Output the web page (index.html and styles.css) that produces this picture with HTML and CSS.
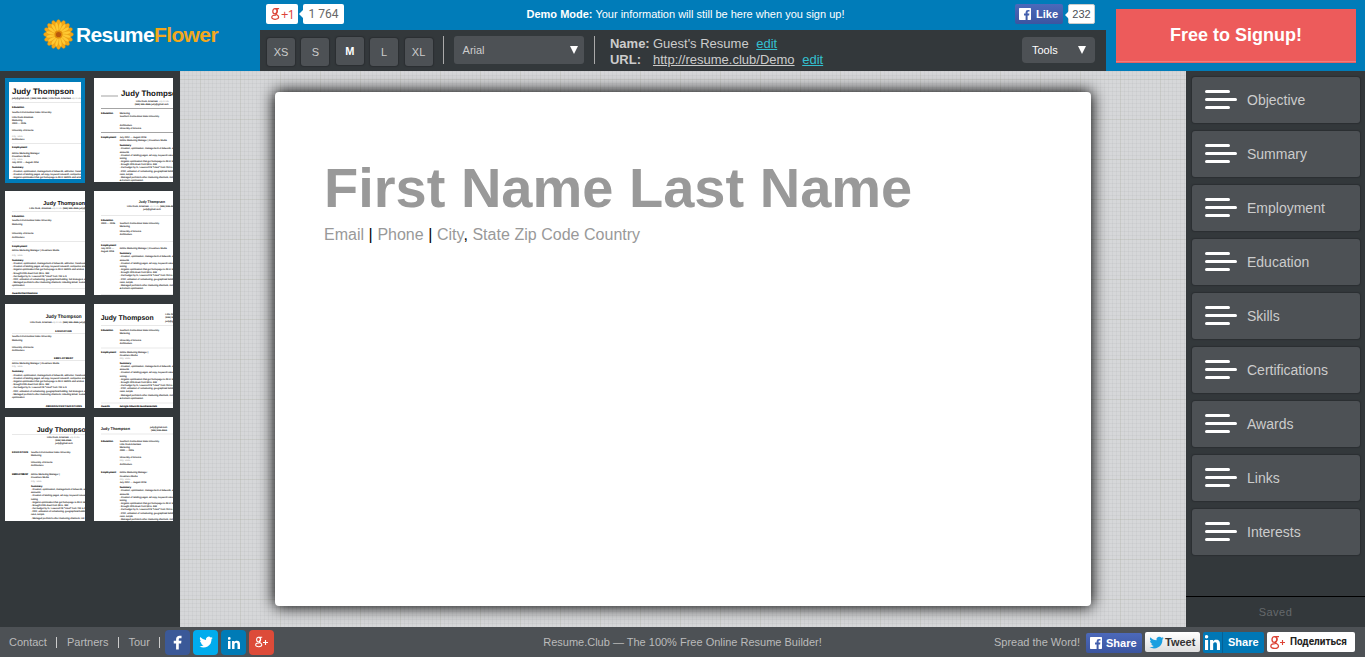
FILE: index.html
```html
<!DOCTYPE html>
<html lang="en">
<head>
<meta charset="utf-8">
<title>Resume Flower</title>
<link rel="stylesheet" href="styles.css">
</head>
<body>
<svg class="defs" width="0" height="0">
  <symbol id="f" viewBox="0 0 24 24"><path d="M13.800 22v-8.700h3.300l.5-3.700h-3.800V7.700c0-1.100.4-1.700 1.900-1.700h2V2.600C17.400 2.500 16.200 2.400 14.900 2.400c-2.900 0-4.900 1.700-4.900 4.900v2.300H6.700v3.700H10V22z"/></symbol>
  <symbol id="fbox" viewBox="0 0 12 12"><path fill-rule="evenodd" d="M.7 0h10.600q.7 0 .7.700v10.600q0 .7-.7.700H8.600V7.500h1.500l.3-1.900H8.600V4.500q0-.9 1-.9h.9V1.900H9q-2.400 0-2.400 2.400v1.300H5v1.900h1.600V12H.7Q0 12 0 11.300V.7Q0 0 .7 0z"/></symbol>
  <symbol id="bird" viewBox="0 0 24 24"><path d="M23.600 4.900c-.8.400-1.700.6-2.700.8 1-.6 1.700-1.500 2.100-2.600-.9.500-1.900.9-3 1.100A4.700 4.700 0 0 0 12 8.500C8.100 8.300 4.600 6.400 2.300 3.600a4.700 4.700 0 0 0 1.500 6.300c-.8 0-1.500-.2-2.100-.6 0 2.400 1.600 4.200 3.800 4.700-.7.200-1.400.2-2.100.1.600 1.900 2.300 3.200 4.400 3.300A9.500 9.500 0 0 1 .8 19.300 13.400 13.400 0 0 0 21.400 7.400c.9-.7 1.600-1.500 2.200-2.500z"/></symbol>
  <symbol id="in" viewBox="0 0 16 16"><path d="M0 5.300h3.300V16H0zM1.650 0a1.900 1.900 0 1 1 0 3.800 1.900 1.900 0 0 1 0-3.800zM5.400 5.300h3.200v1.500c.6-1.100 1.700-1.800 3.300-1.800 3.300 0 4.100 2.100 4.100 4.900V16h-3.300v-5.400c0-1.500-.2-2.800-1.900-2.800-1.800 0-2.100 1.400-2.100 2.700V16H5.400z"/></symbol>
  <symbol id="g" viewBox="0 0 12 16"><g fill="none" stroke="currentColor" stroke-width="1.600"><ellipse cx="5.300" cy="4.400" rx="2.900" ry="3.500"/><path d="M5.300.9h5.500M7.600 1.500c1.800 2.500.8 4.200-1 5.600-1.800 1.500 3.600 2.300 3.600 5 0 3.900-9.200 3.900-9.200.3 0-2.300 2.600-3.100 5.700-3"/></g></symbol>
  <symbol id="plus" viewBox="0 0 8 8"><path d="M4 0v8M0 4h8" stroke="currentColor" stroke-width="1.800"/></symbol>
  <symbol id="lines" viewBox="0 0 32 19"><path d="M1.500 1.500h22M1.500 9.500h29M1.500 17.500h22" stroke="#fff" stroke-width="3" stroke-linecap="round"/></symbol>
</svg>

<header class="header">
  <div class="brand">
    <svg class="flower" viewBox="-15.500 -15.500 31 31"><g id="petals"></g><circle r="4" fill="#e08c0a"/><circle r="2.600" fill="#b9580d"/></svg>
    <span class="brand-name">Resume<b>Flower</b></span>
  </div>
  <div class="middle">
    <div class="topbar">
      <div class="counter">
        <span class="plusone"><svg class="po-g"><use href="#g"/></svg>+1</span>
        <span class="bubble">1 764</span>
      </div>
      <p class="demo"><b>Demo Mode:</b> Your information will still be here when you sign up!</p>
      <div class="counter">
        <span class="like"><svg class="fb-box"><use href="#fbox"/></svg>Like</span>
        <span class="bubble small">232</span>
      </div>
    </div>
    <div class="toolbar">
      <div class="sizes">
        <button>XS</button><button>S</button><button class="on">M</button><button>L</button><button>XL</button>
      </div>
      <i class="rule"></i>
      <div class="select font">Arial<i class="caret"></i></div>
      <i class="rule"></i>
      <div class="info">
        <b>Name:</b><span>Guest's Resume <a>edit</a></span>
        <b>URL:</b><span><u>http://resume.club/Demo</u> <a>edit</a></span>
      </div>
      <div class="select tools">Tools<i class="caret"></i></div>
    </div>
  </div>
  <div class="signup-wrap"><button class="signup">Free to Signup!</button></div>
</header>

<main class="main">
  <aside class="themes" id="themes"></aside>
  <section class="desk">
    <article class="paper">
      <h1>First Name Last Name</h1>
      <p><span>Email</span> | <span>Phone</span> | <span>City</span>, <span>State Zip Code Country</span></p>
    </article>
  </section>
  <aside class="sections">
    <ul>
      <li><svg><use href="#lines"/></svg>Objective</li>
      <li><svg><use href="#lines"/></svg>Summary</li>
      <li><svg><use href="#lines"/></svg>Employment</li>
      <li><svg><use href="#lines"/></svg>Education</li>
      <li><svg><use href="#lines"/></svg>Skills</li>
      <li><svg><use href="#lines"/></svg>Certifications</li>
      <li><svg><use href="#lines"/></svg>Awards</li>
      <li><svg><use href="#lines"/></svg>Links</li>
      <li><svg><use href="#lines"/></svg>Interests</li>
    </ul>
    <div class="saved">Saved</div>
  </aside>
</main>

<footer class="footer">
  <nav class="links">
    <a>Contact</a><i></i><a>Partners</a><i></i><a>Tour</a><i></i>
    <span class="social">
      <span class="sq fb"><svg width="17" height="17"><use href="#f"/></svg></span>
      <span class="sq tw"><svg width="14" height="14"><use href="#bird"/></svg></span>
      <span class="sq li"><svg width="12" height="12"><use href="#in"/></svg></span>
      <span class="sq gp"><svg width="8" height="12"><use href="#g"/></svg><svg width="5" height="5"><use href="#plus"/></svg></span>
    </span>
  </nav>
  <p>Resume.Club — The 100% Free Online Resume Builder!</p>
  <div class="spread">
    <span class="word">Spread the Word!</span>
    <span class="btn share"><svg class="fb-box"><use href="#fbox"/></svg>Share</span>
    <span class="btn tweet"><svg width="15" height="15"><use href="#bird"/></svg>Tweet</span>
    <span class="btn linked"><span><svg width="15" height="15"><use href="#in"/></svg></span>Share</span>
    <span class="btn gshare"><svg width="10" height="15"><use href="#g"/></svg><svg width="5" height="5"><use href="#plus"/></svg><b>Поделиться</b></span>
  </div>
</footer>
<script src="app.js"></script>
</body>
</html>
```

FILE: styles.css
```css
* { box-sizing: border-box; }
body { margin: 0; height: 657px; overflow: hidden; display: flex; flex-direction: column; font-family: "Liberation Sans", Arial, sans-serif; color: #ccc; background: #33383b; }
p, h1, ul { margin: 0; padding: 0; }
button { font: inherit; border: 0; padding: 0; }
svg { display: block; flex: none; }
.defs { position: absolute; }

.header { height: 71px; flex: none; display: grid; grid-template-columns: 260px 846px 1fr; background: #007cb9; }
.brand { display: flex; align-items: center; padding: 0 0 3px 43px; color: #fff; }
.flower { width: 31px; height: 31px; margin-right: 2px; }
.brand-name { font-size: 21px; font-weight: bold; letter-spacing: -.62px; line-height: 24px; margin-top: 2px; }
.brand-name b { color: #f3a81c; }
.topbar { height: 30px; display: flex; justify-content: space-between; align-items: center; padding: 0 11px 2px 6px; }
.counter { display: flex; gap: 5px; height: 20px; }
.plusone, .bubble, .like { display: flex; align-items: center; height: 20px; border-radius: 2px; }
.plusone { width: 32px; background: #fff; color: #dc4437; font: 13px/18px "Open Sans", sans-serif; letter-spacing: -1px; padding: 0 0 1px 5px; }
.po-g { width: 9px; height: 12px; margin: 1px 1px 0 0; }
.bubble { position: relative; width: 41px; justify-content: center; background: #fff; color: #666; font: 12px/20px Roboto, sans-serif; }
.bubble::before { content: ""; position: absolute; left: -4px; top: 6px; border: 4px solid transparent; border-left: 0; border-right-color: #fff; }
.like { width: 48px; background: linear-gradient(#4c69ba, #3b55a0); color: #fff; font-size: 11px; font-weight: bold; padding-left: 4px; gap: 5px; }
.small { width: 27px; font: 11px "Liberation Sans", sans-serif; color: #4b4f56; border: 1px solid #ccc; }
.fb-box { width: 12px; height: 12px; fill: #fff; }
.demo { color: #fff; font-size: 11px; margin-left: 12px; }
.toolbar { height: 41px; background: #33383b; display: flex; align-items: flex-start; padding: 6px 11px 0 7px; }
.sizes { display: flex; gap: 6.400px; padding-top: 2px; }
.sizes button { width: 28px; height: 28px; border-radius: 3px; background: #4d5155; color: #ccc; font-size: 11px; box-shadow: 0 0 1px 1px #2b2f32; }
.sizes .on { margin-top: -1px; color: #fff; font-weight: bold; }
.rule { width: 1px; height: 28px; background: #aaa; margin: 0 10px; }
.rule + .info { margin-left: 5.400px; }
.select { display: flex; align-items: center; justify-content: space-between; background: #4d5155; border-radius: 3px; font-size: 11px; }
.font { width: 130px; height: 28px; padding: 0 6px 0 9px; }
.tools { width: 73px; height: 26px; margin: 1px 0 0 auto; padding: 0 9px 0 10px; color: #fff; border-radius: 4px; }
.caret { border: 4.500px solid transparent; border-top: 8px solid #fff; border-bottom: 0; }
.info { display: grid; grid-template-columns: 43px auto; font-size: 13px; line-height: 16px; }
.info a { color: #33c0d0; text-decoration: underline; margin-left: 4px; }
.signup-wrap { padding: 9px 9px 0 10px; }
.signup { width: 240px; height: 54px; background: #ed5b5b; color: #fff; font-size: 18px; font-weight: bold; border-bottom: 1px solid #e66062; box-shadow: inset 0 -1px #f17c7b; }

.main { flex: 1; display: grid; grid-template-columns: 180px 1006px 179px; min-height: 0; }
.themes { display: grid; grid-template-columns: 80px 79px; grid-auto-rows: 104px; gap: 9px; padding: 7px 0 0 5px; align-content: start; }
.thumb { width: 100%; height: 104px; background: #fff; overflow: hidden; text-rendering: geometricPrecision; }
.thumb.on { height: 105px; border: 4px solid #007cb9; }
.thumb text { fill: #333; stroke: #333; stroke-width: .25px; font-size: 7px; }
.thumb .h { fill: #111; stroke: none; font-weight: bold; }
.thumb .b { fill: #000; stroke: #000; font-weight: bold; font-size: 7.500px; }
.thumb .l { fill: #999; stroke: none; }

.desk { padding: 21px 0 0 95px; background-color: #d6d7d9;
  background-image: linear-gradient(90deg, rgba(175,178,160,.22) 1px, transparent 1px), linear-gradient(rgba(175,178,160,.22) 1px, transparent 1px), linear-gradient(90deg, rgba(150,155,155,.1) 1px, transparent 1px), linear-gradient(rgba(150,155,155,.1) 1px, transparent 1px);
  background-size: 40px 40px, 40px 40px, 4px 4px, 4px 4px; background-position: 20px 8px; }
.paper { width: 816px; height: 514px; background: #fff; border-radius: 4px; box-shadow: 0 0 15px 1px #000; padding: 64px 49px; color: #000; }
.paper h1 { font-size: 56px; line-height: 64px; color: #999; }
.paper p { font-size: 16px; line-height: 20px; margin-top: 5px; word-spacing: .15px; }
.paper p span { color: #999; }

.sections { display: flex; flex-direction: column; justify-content: space-between; }
.sections ul { list-style: none; padding: 6px 0 0 6px; display: grid; gap: 8px; }
.sections li { width: 168px; height: 46px; display: flex; align-items: center; gap: 10px; padding-left: 13px; background: #4d5155; border-radius: 3px; box-shadow: 0 0 1px 1px #2b2f32; font-size: 14px; }
.sections svg { width: 32px; height: 19px; margin-bottom: 1px; }
.saved { height: 31px; border-top: 1px solid #000; text-align: center; font-size: 11px; letter-spacing: .5px; line-height: 30px; color: #65696c; }

.footer { height: 30px; flex: none; display: grid; grid-template-columns: 1fr auto 1fr; align-items: center; background: #4d5155; font-size: 11px; color: #bbb; }
.links { display: flex; align-items: center; padding-left: 9px; }
.links i { width: 1px; height: 11px; background: #ccc; margin: 0 10px 0 9px; }
.links i:last-of-type { margin-left: 9.500px; }
.social { display: flex; gap: 3px; margin-left: -5px; }
.sq { width: 25px; height: 25px; border-radius: 4px; display: flex; align-items: center; justify-content: center; color: #fff; fill: #fff; }
.fb { background: #3b5998; }
.tw { background: #00aced; }
.li { background: #007bb6; padding-top: 2px; }
.gp { background: #dd4b39; }
.spread { display: flex; align-items: center; justify-content: flex-end; padding-right: 10px; gap: 3px; }
.word { margin-right: 3px; }
.btn { display: flex; align-items: center; height: 20px; border-radius: 2px; font-weight: bold; color: #fff; }
.share { width: 56px; background: linear-gradient(#4c69ba, #3b55a0); padding-left: 4px; gap: 4px; margin-top: 2px; }
.tweet { width: 55px; background: linear-gradient(#fff, #dedede); color: #333; padding-left: 4px; gap: 1px; }
.tweet svg { fill: #1b9fe0; }
.linked { width: 61px; height: 21px; background: #0077b5; fill: #fff; gap: 5px; }
.linked span { width: 20px; height: 21px; display: flex; align-items: center; justify-content: center; border-right: 1px solid #066094; }
.gshare { width: 88px; background: #fff; color: #dc4437; padding-left: 3px; }
.gshare b { color: #222; font: bold 10px Roboto, sans-serif; margin: 0 0 1px 5px; }
```

FILE: app.js
```js
const NS = 'http://www.w3.org/2000/svg';
const make = (parent, tag, attrs, text) => {
  const el = document.createElementNS(NS, tag);
  for (const k in attrs) el.setAttribute(k, attrs[k]);
  if (text) el.textContent = text;
  parent.appendChild(el);
  return el;
};

// Two rings of rounded petals: a darker outer ring and a brighter inner one
const petals = document.getElementById('petals');
for (const [count, len, half, fill, offset] of [[16, 15, 3.200, '#f5a816', 0], [16, 12.500, 2.200, '#ffc932', 11.250]]) {
  for (let i = 0; i < count; i++) {
    make(petals, 'path', {
      d: `M0 0C-${half} -5 -${half} -${len} 0 -${len}C${half} -${len} ${half} -5 0 0`,
      fill, stroke: '#dd8d0c', 'stroke-width': .35,
      transform: `rotate(${offset + i * 360 / count})`
    });
  }
}

const school = 'Southern Connecticut State University';
const job = 'Online Marketing Manager | Covanture Media';
const wide = ['- Creation, optimization, management of Adwords, adCenter, Facebook', '- Creation of landing pages, ad copy, keyword research, competitor analysis', '- Organic optimization that got homepage to #3 in SERPs and articles', '- Brought CPA down from $9 to .98¢', '- Cut budget by ¼, Lowered FB "Likes" from 70¢ to 9', '- PPC, utilization of remarketing, geographical bidding, bid strategies, ads', '- Managed portfolio\'s other marketing channels, including Email, Social', 'optimization'];
const narrow = ['- Creation, optimization, management of Adwords, ad', 'accounts', '- Creation of landing pages, ad copy, keyword research', 'testing', '- Organic optimization that got homepage to #3 in SE', '- Brought CPA down from $9 to .98¢', '- Cut budget by ¼, Lowered FB "Likes" from 70¢ to 9', '- PPC, utilization of remarketing, geographical bidding', 'rules, scripts', '- Managed portfolio\'s other marketing channels, incl', '& Content optimization'];
const block = (x, y, list) => list.map((t, i) => [x, y + i * 9.500, t]);

// Each preview: viewBox, title [x, baseline, width, size], rules [x, y, width], text [x, baseline, text, class]
const previews = [
  { box: '27 36 216 291', on: true, title: [36, 73, 186, 24], rules: [[36, 97, 210], [36, 219, 210]],
    text: [[36, 86, 'judy@gmail.com | (555) 555-4565 | Little Rock, Arkansas'], [215, 86, 'Zip Code', 'l'], [36, 113, 'Education', 'b'], [36, 130, school], [36, 145, 'Little Rock Arkansas'], [36, 154, 'Marketing'], [36, 163, '2000 — 2005'], [36, 184, 'University of Arizona'], [36, 200, 'City, State', 'l'], [36, 209, 'Architecture'], [36, 235, 'Employment', 'b'], [36, 252, 'Online Marketing Manager'], [36, 261, 'Covanture Media'], [36, 271, 'City, State', 'l'], [36, 280, 'July 2012 — August 2014'], [36, 295, 'Summary', 'b'], ...block(36, 305, wide.slice(0, 3))] },
  { box: '282 24 237 312', title: [363, 77, 182, 24], rules: [[303, 77, 51, 1], [303, 115, 220, 1], [303, 187, 220, 1]],
    text: [[408, 95, 'Little Rock, Arkansas'], [478, 95, 'Zip Code', 'l'], [404, 105, '(555) 555-4565   judy@gmail.com'], [303, 131, 'Education', 'b'], [359, 131, 'Marketing'], [359, 141, school], [359, 168, 'Architecture'], [359, 177, 'University of Arizona'], [303, 204, 'Employment', 'b'], [359, 204, 'July 2012 — August 2014'], [359, 214, job], [359, 228, 'Summary', 'b'], ...block(359, 238, narrow)] },
  { box: '15 18 240 312', title: [130, 59, 125, 17], rules: [[36, 79, 220], [36, 169, 220], [36, 310, 220]],
    text: [[88, 71, 'Little Rock, Arkansas'], [157, 71, 'Zip Code', 'l'], [188, 71, '(555) 555-4565   judy@gmail.com'], [36, 97, 'Education', 'b'], [36, 109, school], [36, 121, 'Marketing'], [36, 148, 'University of Arizona'], [36, 160, 'Architecture'], [36, 187, 'Employment', 'b'], [36, 199, job], [36, 212, 'City, State', 'l'], [36, 227, 'Summary', 'b'], ...block(36, 237, wide), [36, 328, 'Awards/Certifications', 'b']] },
  { box: '282 18 237 312', title: [416, 53, 79, 11], rules: [[303, 91, 220], [303, 168, 220], [303, 327, 220]],
    text: [[381, 66, 'Little Rock, Arkansas'], [449, 66, 'Zip Code', 'l'], [480, 66, '(555) 555-4565'], [430, 75, 'judy@gmail.com'], [303, 107, 'Education', 'b'], [303, 117, '2000 — 2005'], [359, 117, school], [359, 127, 'Marketing'], [359, 142, 'University of Arizona'], [359, 151, 'Architecture'], [303, 183, 'Employment', 'b'], [303, 192, 'July 2012 —'], [303, 202, 'August 2014'], [359, 192, job], [359, 207, 'Summary', 'b'], ...block(359, 217, narrow)] },
  { box: '15 12 240 312', title: [137, 54, 108, 15], rules: [[36, 100, 220], [36, 181, 220]],
    text: [[90, 68, 'Little Rock, Arkansas'], [157, 68, 'Zip Code', 'l'], [188, 68, '(555) 555-4565   judy@gmail.com'], [166, 97, 'EDUCATION', 'b', 49], [36, 112, school], [36, 122, 'Marketing'], [36, 143, 'University of Arizona'], [36, 153, 'Architecture'], [162, 178, 'EMPLOYMENT', 'b', 58], [36, 193, job], [36, 202, 'City, State', 'l'], [36, 217, 'Summary', 'b'], ...block(36, 227, wide), [137, 320, 'AWARDS/CERTIFICATIONS', 'b', 109]] },
  { box: '282 12 237 312', title: [302, 61, 159, 21], rules: [[303, 76, 220], [303, 143, 220], [303, 308, 220]],
    text: [[496, 45, 'Little Rock, Arkansas'], [496, 55, '(555) 555-4565'], [496, 65, 'judy@gmail.com'], [303, 92, 'Education', 'b'], [359, 92, school], [359, 101, 'Marketing'], [359, 122, 'University of Arizona'], [359, 131, 'Architecture'], [303, 158, 'Employment', 'b'], [359, 158, 'Online Marketing Manager |'], [359, 167, 'Covanture Media'], [359, 176, 'City, State', 'l'], [359, 192, 'Summary', 'b'], ...block(359, 201, narrow), [303, 322, 'Awards', 'b'], [359, 322, 'Google Adwords Fundamentals', 'b']] },
  { box: '15 15 240 312', title: [110, 59, 160, 21], rules: [[36, 67, 220]],
    text: [[141, 79, 'Little Rock, Arkansas'], [210, 79, 'Zip Code', 'l'], [166, 88, '(555) 555-4565'], [166, 97, 'judy@gmail.com'], [36, 124, 'EDUCATION', 'b', 48], [93, 124, school], [93, 133, 'Marketing'], [93, 154, 'University of Arizona'], [93, 163, 'Architecture'], [36, 190, 'EMPLOYMENT', 'b', 49], [93, 190, 'Online Marketing Manager |'], [93, 199, 'Covanture Media'], [93, 209, 'City, State', 'l'], [93, 224, 'Summary', 'b'], ...block(93, 234, narrow.slice(0, 10))] },
  { box: '282 15 237 312', title: [302, 55, 88, 12], rules: [[303, 65, 220]],
    text: [[450, 49, 'judy@gmail.com'], [453, 58, '(555) 555-4565'], [303, 90, 'Education', 'b'], [359, 90, school], [359, 99, 'Little Rock Arkansas'], [359, 109, 'Marketing'], [359, 118, '2000 — 2005'], [359, 139, 'University of Arizona'], [359, 148, 'City, State', 'l'], [359, 158, 'Architecture'], [303, 184, 'Employment', 'b'], [359, 184, 'Online Marketing Manager'], [359, 194, 'Covanture Media'], [359, 204, 'City, State', 'l'], [359, 213, 'July 2012 — August 2014'], [359, 228, 'Summary', 'b'], ...block(359, 238, narrow.slice(0, 10))] }
];

const themes = document.getElementById('themes');
for (const p of previews) {
  const svg = make(themes, 'svg', { class: p.on ? 'thumb on' : 'thumb', viewBox: p.box, preserveAspectRatio: 'xMinYMin meet' });
  const [x, y, w, size] = p.title;
  make(svg, 'text', { x, y, class: 'h', textLength: w, lengthAdjust: 'spacingAndGlyphs', style: 'font-size:' + size + 'px' }, 'Judy Thompson');
  for (const [rx, ry, rw, dark] of p.rules) make(svg, 'rect', { x: rx, y: ry, width: rw, height: 2, fill: dark ? '#777' : '#ddd' });
  for (const [tx, ty, t, cls, len] of p.text) {
    const a = { x: tx, y: ty, class: cls || '' };
    if (len) a.textLength = len;
    make(svg, 'text', a, t);
  }
}
```
